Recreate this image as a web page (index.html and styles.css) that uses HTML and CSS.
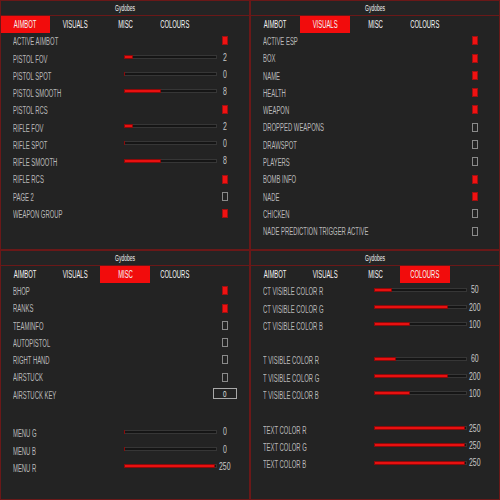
FILE: index.html
```html
<!DOCTYPE html>
<html>
<head>
<meta charset="utf-8">
<link rel="stylesheet" href="styles.css">
</head>
<body>
<div class="screen">

  <div class="panel">
    <div class="title"><span class="tt">Gydobes</span></div>
    <div class="tabs">
      <div class="tab active"><span class="tx">AIMBOT</span></div>
      <div class="tab"><span class="tx">VISUALS</span></div>
      <div class="tab"><span class="tx">MISC</span></div>
      <div class="tab"><span class="tx">COLOURS</span></div>
    </div>
    <div class="rows">
      <div class="row"><span class="lbl">ACTIVE AIMBOT</span><span class="cb on"></span></div>
      <div class="row"><span class="lbl">PISTOL FOV</span><div class="track"><div class="fill" style="width:10%"></div></div><span class="val">2</span></div>
      <div class="row"><span class="lbl">PISTOL SPOT</span><div class="track"><div class="fill" style="width:1px"></div></div><span class="val">0</span></div>
      <div class="row"><span class="lbl">PISTOL SMOOTH</span><div class="track"><div class="fill" style="width:40%"></div></div><span class="val">8</span></div>
      <div class="row"><span class="lbl">PISTOL RCS</span><span class="cb on"></span></div>
      <div class="row"><span class="lbl">RIFLE FOV</span><div class="track"><div class="fill" style="width:10%"></div></div><span class="val">2</span></div>
      <div class="row"><span class="lbl">RIFLE SPOT</span><div class="track"><div class="fill" style="width:1px"></div></div><span class="val">0</span></div>
      <div class="row"><span class="lbl">RIFLE SMOOTH</span><div class="track"><div class="fill" style="width:40%"></div></div><span class="val">8</span></div>
      <div class="row"><span class="lbl">RIFLE RCS</span><span class="cb on"></span></div>
      <div class="row"><span class="lbl">PAGE 2</span><span class="cb"></span></div>
      <div class="row"><span class="lbl">WEAPON GROUP</span><span class="cb on"></span></div>
    </div>
  </div>

  <div class="panel">
    <div class="title"><span class="tt">Gydobes</span></div>
    <div class="tabs">
      <div class="tab"><span class="tx">AIMBOT</span></div>
      <div class="tab active"><span class="tx">VISUALS</span></div>
      <div class="tab"><span class="tx">MISC</span></div>
      <div class="tab"><span class="tx">COLOURS</span></div>
    </div>
    <div class="rows">
      <div class="row"><span class="lbl">ACTIVE ESP</span><span class="cb on"></span></div>
      <div class="row"><span class="lbl">BOX</span><span class="cb on"></span></div>
      <div class="row"><span class="lbl">NAME</span><span class="cb on"></span></div>
      <div class="row"><span class="lbl">HEALTH</span><span class="cb on"></span></div>
      <div class="row"><span class="lbl">WEAPON</span><span class="cb on"></span></div>
      <div class="row"><span class="lbl">DROPPED WEAPONS</span><span class="cb"></span></div>
      <div class="row"><span class="lbl">DRAWSPOT</span><span class="cb"></span></div>
      <div class="row"><span class="lbl">PLAYERS</span><span class="cb"></span></div>
      <div class="row"><span class="lbl">BOMB INFO</span><span class="cb on"></span></div>
      <div class="row"><span class="lbl">NADE</span><span class="cb on"></span></div>
      <div class="row"><span class="lbl">CHICKEN</span><span class="cb"></span></div>
      <div class="row"><span class="lbl">NADE PREDICTION TRIGGER ACTIVE</span><span class="cb"></span></div>
    </div>
  </div>

  <div class="panel">
    <div class="title"><span class="tt">Gydobes</span></div>
    <div class="tabs">
      <div class="tab"><span class="tx">AIMBOT</span></div>
      <div class="tab"><span class="tx">VISUALS</span></div>
      <div class="tab active"><span class="tx">MISC</span></div>
      <div class="tab"><span class="tx">COLOURS</span></div>
    </div>
    <div class="rows">
      <div class="row"><span class="lbl">BHOP</span><span class="cb on"></span></div>
      <div class="row"><span class="lbl">RANKS</span><span class="cb on"></span></div>
      <div class="row"><span class="lbl">TEAMINFO</span><span class="cb"></span></div>
      <div class="row"><span class="lbl">AUTOPISTOL</span><span class="cb"></span></div>
      <div class="row"><span class="lbl">RIGHT HAND</span><span class="cb"></span></div>
      <div class="row"><span class="lbl">AIRSTUCK</span><span class="cb"></span></div>
      <div class="row"><span class="lbl">AIRSTUCK KEY</span><span class="key"><span class="kt">0</span></span></div>
      <div class="spacer wide"></div>
      <div class="row"><span class="lbl">MENU G</span><div class="track"><div class="fill" style="width:1px"></div></div><span class="val">0</span></div>
      <div class="row"><span class="lbl">MENU B</span><div class="track"><div class="fill" style="width:1px"></div></div><span class="val">0</span></div>
      <div class="row"><span class="lbl">MENU R</span><div class="track"><div class="fill" style="width:98%"></div></div><span class="val">250</span></div>
    </div>
  </div>

  <div class="panel">
    <div class="title"><span class="tt">Gydobes</span></div>
    <div class="tabs">
      <div class="tab"><span class="tx">AIMBOT</span></div>
      <div class="tab"><span class="tx">VISUALS</span></div>
      <div class="tab"><span class="tx">MISC</span></div>
      <div class="tab active"><span class="tx">COLOURS</span></div>
    </div>
    <div class="rows">
      <div class="row"><span class="lbl">CT VISIBLE COLOR R</span><div class="track"><div class="fill" style="width:19.6%"></div></div><span class="val">50</span></div>
      <div class="row"><span class="lbl">CT VISIBLE COLOR G</span><div class="track"><div class="fill" style="width:80%"></div></div><span class="val">200</span></div>
      <div class="row"><span class="lbl">CT VISIBLE COLOR B</span><div class="track"><div class="fill" style="width:39.2%"></div></div><span class="val">100</span></div>
      <div class="spacer"></div>
      <div class="row"><span class="lbl">T VISIBLE COLOR R</span><div class="track"><div class="fill" style="width:23.5%"></div></div><span class="val">60</span></div>
      <div class="row"><span class="lbl">T VISIBLE COLOR G</span><div class="track"><div class="fill" style="width:80%"></div></div><span class="val">200</span></div>
      <div class="row"><span class="lbl">T VISIBLE COLOR B</span><div class="track"><div class="fill" style="width:39.2%"></div></div><span class="val">100</span></div>
      <div class="spacer"></div>
      <div class="row"><span class="lbl">TEXT COLOR R</span><div class="track"><div class="fill" style="width:98%"></div></div><span class="val">250</span></div>
      <div class="row"><span class="lbl">TEXT COLOR G</span><div class="track"><div class="fill" style="width:98%"></div></div><span class="val">250</span></div>
      <div class="row"><span class="lbl">TEXT COLOR B</span><div class="track"><div class="fill" style="width:98%"></div></div><span class="val">250</span></div>
    </div>
  </div>

</div>
</body>
</html>
```

FILE: styles.css
```css
* { box-sizing: border-box; }

html, body {
  margin: 0;
  padding: 0;
  background: #232323;
}

body {
  font-family: "Liberation Sans", Arial, sans-serif;
}

.screen {
  display: grid;
  grid-template-columns: 250px 250px;
  grid-template-rows: 250px 250px;
  width: 500px;
  height: 500px;
}

.panel {
  border: 1px solid #6a1818;
  background: #232323;
  overflow: hidden;
  display: flex;
  flex-direction: column;
}

.title {
  height: 15px;
  border-bottom: 1px solid #6a1818;
  display: flex;
  align-items: center;
  justify-content: center;
  background: #242424;
}

.tt {
  display: inline-block;
  font-size: 8.5px;
  color: #f2f2f2;
  transform: scaleX(0.59);
  white-space: nowrap;
}

.tabs {
  display: flex;
  height: 17.3px;
  margin-left: -1px;
}

.tab {
  width: 50px;
  height: 100%;
  display: flex;
  align-items: center;
  justify-content: center;
}

.tab.active {
  background: #f20c0c;
}

.tx {
  display: inline-block;
  font-size: 10px;
  color: #f4f4f4;
  transform: scaleX(0.59);
  white-space: nowrap;
}

.rows {
  padding-left: 12px;
  display: flex;
  flex-direction: column;
}

.row {
  display: grid;
  grid-template-columns: 111px 93px 16px;
  height: 17.3px;
  align-items: center;
}

.spacer {
  height: 17.3px;
}

.spacer.wide {
  height: 21px;
}

.lbl {
  grid-column: 1;
  display: inline-block;
  justify-self: start;
  font-size: 10px;
  line-height: 12px;
  color: #b9b9b9;
  transform: scaleX(0.59);
  transform-origin: left center;
  white-space: nowrap;
}

.track {
  grid-column: 2;
  height: 4px;
  background: #151515;
  box-shadow: inset 0 0 0 1px #363636;
  margin-bottom: 5.4px;
  display: flex;
}

.fill {
  height: 4px;
  background: #e81010;
  box-shadow: inset 0 0 0 1px #8c0a0a;
}

.val {
  grid-column: 3;
  justify-self: center;
  display: inline-block;
  font-size: 10.5px;
  line-height: 12px;
  color: #c8c8c8;
  transform: scaleX(0.66);
  white-space: nowrap;
  margin-bottom: 6px;
}

.cb {
  grid-column: 3;
  justify-self: center;
  width: 6px;
  height: 9px;
  border: 1px solid #8a8a8a;
  margin-bottom: 2.4px;
}

.cb.on {
  background: #f01212;
  border-color: #a01010;
}

.key {
  grid-column: 3;
  margin: 0 -4px 4.6px -4px;
  height: 11px;
  border: 1px solid #a8a8a8;
  display: flex;
  align-items: center;
  justify-content: center;
}

.kt {
  display: inline-block;
  font-size: 9.5px;
  line-height: 9px;
  color: #e0e0e0;
  transform: scaleX(0.66);
}
```
